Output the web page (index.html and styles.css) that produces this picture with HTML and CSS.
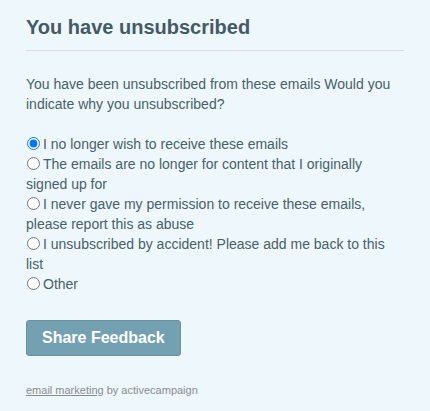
FILE: index.html
```html
<!DOCTYPE html>
<html>
<head>
<meta charset="utf-8">
<link rel="stylesheet" href="styles.css">
</head>
<body>
<div class="page">
  <h1 class="title">You have unsubscribed</h1>
  <hr class="rule">
  <p class="intro">You have been unsubscribed from these emails Would you indicate why you unsubscribed?</p>
  <form class="reasons">
    <label class="reason"><input type="radio" name="r" checked>I no longer wish to receive these emails</label>
    <label class="reason"><input type="radio" name="r">The emails are no longer for content that I originally signed up for</label>
    <label class="reason"><input type="radio" name="r">I never gave my permission to receive these emails, please report this as abuse</label>
    <label class="reason"><input type="radio" name="r">I unsubscribed by accident! Please add me back to this list</label>
    <label class="reason"><input type="radio" name="r">Other</label>
    <button type="button" class="submit">Share Feedback</button>
  </form>
  <p class="footer"><a href="#" class="footer-link">email marketing</a> by activecampaign</p>
</div>
</body>
</html>
```
FILE: styles.css
```css
html, body {
  margin: 0;
  padding: 0;
  background: #edf7fc;
}
.page {
  padding: 14px 26px 0 26px;
  font-family: "Liberation Sans", Arial, Helvetica, sans-serif;
  color: #4a5f6a;
}
.title {
  margin: 0;
  font-size: 20px;
  line-height: 26px;
  font-weight: bold;
  color: #455a64;
}
.rule {
  border: 0;
  border-top: 1px solid #d9dcdd;
  margin: 10px 0 0 0;
}
.intro {
  margin: 23px 0 0 0;
  font-size: 14px;
  line-height: 20px;
}
.reasons {
  margin-top: 20px;
  display: block;
}
.reason {
  display: block;
  font-size: 14px;
  line-height: 20px;
}
.reason input {
  margin: 0 3px 0 1px;
  width: 13px;
  height: 13px;
  vertical-align: -1px;
}
.submit {
  display: block;
  margin-top: 26px;
  height: 36px;
  padding: 0 15px;
  background: #73a1b2;
  border: 1px solid #6892a3;
  border-radius: 3px;
  color: #fff;
  font-family: "Liberation Sans", Arial, Helvetica, sans-serif;
  font-weight: bold;
  font-size: 16px;
}
.footer {
  margin: 27px 0 0 0;
  font-size: 11px;
  line-height: 14px;
  color: #8a8d8f;
}
.footer-link {
  color: #8a8d8f;
  text-decoration: underline;
}
```
